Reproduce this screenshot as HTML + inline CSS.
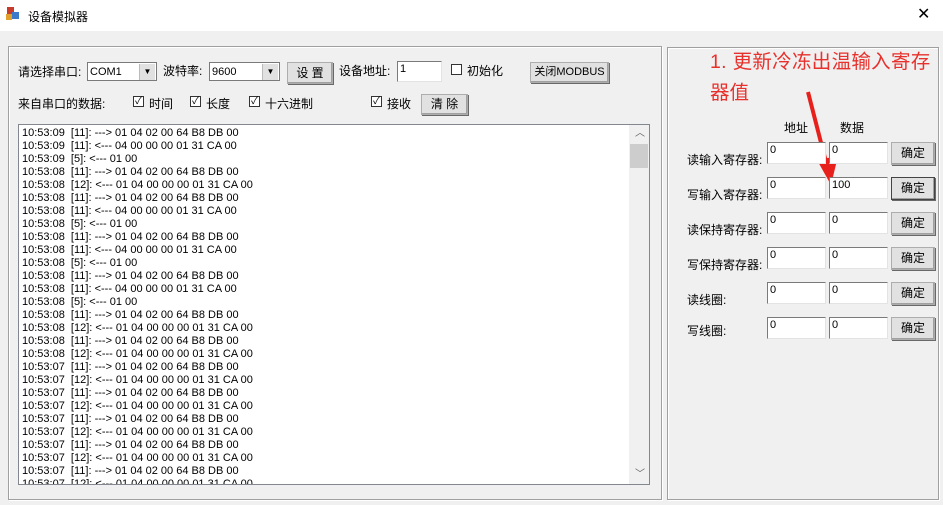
<!DOCTYPE html>
<html><head><meta charset="utf-8"><style>
body{margin:0;width:943px;height:505px;overflow:hidden;background:#f0f0f0;font-family:"Liberation Sans","Noto Sans CJK SC",sans-serif;font-size:12px;color:#000;position:relative}
.a{position:absolute;white-space:nowrap}
.grp{position:absolute;border:1px solid #a0a0a0;box-shadow:inset 1px 1px 0 #fff,1px 1px 0 #fff}
.edit{position:absolute;background:#fff;border:1px solid #7a7a7a;border-right-color:#e3e3e3;border-bottom-color:#e3e3e3;box-sizing:border-box;font-size:11px;padding:1px 2px;line-height:13px}
.btn{position:absolute;background:#e1e1e1;border:1px solid #adadad;box-shadow:inset -1px -1px 0 #a0a0a0,1px 1px 0 #696969;box-sizing:border-box;text-align:center;font-size:12px}
.cb{position:absolute;width:11px;height:11px;border:1px solid #333;background:#fff;box-sizing:border-box;font-size:10px;line-height:9px;text-align:center}
.combo{position:absolute;background:#fff;border:1px solid #7a7a7a;box-sizing:border-box;font-size:11px;padding:2px 2px;line-height:14px}
.combo i{position:absolute;right:1px;top:1px;width:15px;height:16px;background:#e1e1e1;border-left:1px solid #bbb;font-style:normal;font-size:8px;text-align:center;line-height:16px}
.log{position:absolute;left:18px;top:124px;width:632px;height:361px;background:#fff;border:1px solid #828790;box-sizing:border-box;overflow:hidden;padding-top:2px}
.log div{font-size:11px;line-height:13px;padding-left:3px;white-space:pre}
</style></head><body>
<div class="a" style="left:0;top:0;width:943px;height:31px;background:#fff"></div>
<div class="a" style="left:7px;top:7px;width:7px;height:9px;background:#c83a2a"></div>
<div class="a" style="left:12px;top:12px;width:7px;height:7px;background:#3a7ac8"></div>
<div class="a" style="left:6px;top:14px;width:6px;height:6px;background:#e0a030"></div>
<div class="a" style="left:28px;top:8px;font-size:12px">设备模拟器</div>
<div class="a" style="left:917px;top:4px;font-size:16px;color:#000">✕</div>

<div class="grp" style="left:8px;top:46px;width:652px;height:452px"></div>
<div class="grp" style="left:667px;top:47px;width:270px;height:451px"></div>

<div class="a" style="left:18px;top:63px">请选择串口:</div>
<div class="combo" style="left:87px;top:62px;width:70px;height:19px">COM1<i>▼</i></div>
<div class="a" style="left:163px;top:62px">波特率:</div>
<div class="combo" style="left:209px;top:62px;width:71px;height:19px">9600<i>▼</i></div>
<div class="btn" style="left:287px;top:62px;width:46px;height:22px;line-height:20px">设 置</div>
<div class="a" style="left:339px;top:62px">设备地址:</div>
<div class="edit" style="left:397px;top:61px;width:45px;height:21px">1</div>
<div class="cb" style="left:451px;top:64px"></div>
<div class="a" style="left:467px;top:62px">初始化</div>
<div class="btn" style="left:530px;top:62px;width:79px;height:21px;line-height:19px;font-size:11px">关闭MODBUS</div>

<div class="a" style="left:18px;top:95px">来自串口的数据:</div>
<div class="cb" style="left:133px;top:96px">✓</div><div class="a" style="left:149px;top:95px">时间</div>
<div class="cb" style="left:190px;top:96px">✓</div><div class="a" style="left:206px;top:95px">长度</div>
<div class="cb" style="left:249px;top:96px">✓</div><div class="a" style="left:265px;top:95px">十六进制</div>
<div class="cb" style="left:371px;top:96px">✓</div><div class="a" style="left:387px;top:95px">接收</div>
<div class="btn" style="left:421px;top:94px;width:47px;height:21px;line-height:19px">清 除</div>

<div class="log">
<div>10:53:09  [11]: ---> 01 04 02 00 64 B8 DB 00</div>
<div>10:53:09  [11]: <--- 04 00 00 00 01 31 CA 00</div>
<div>10:53:09  [5]: <--- 01 00</div>
<div>10:53:08  [11]: ---> 01 04 02 00 64 B8 DB 00</div>
<div>10:53:08  [12]: <--- 01 04 00 00 00 01 31 CA 00</div>
<div>10:53:08  [11]: ---> 01 04 02 00 64 B8 DB 00</div>
<div>10:53:08  [11]: <--- 04 00 00 00 01 31 CA 00</div>
<div>10:53:08  [5]: <--- 01 00</div>
<div>10:53:08  [11]: ---> 01 04 02 00 64 B8 DB 00</div>
<div>10:53:08  [11]: <--- 04 00 00 00 01 31 CA 00</div>
<div>10:53:08  [5]: <--- 01 00</div>
<div>10:53:08  [11]: ---> 01 04 02 00 64 B8 DB 00</div>
<div>10:53:08  [11]: <--- 04 00 00 00 01 31 CA 00</div>
<div>10:53:08  [5]: <--- 01 00</div>
<div>10:53:08  [11]: ---> 01 04 02 00 64 B8 DB 00</div>
<div>10:53:08  [12]: <--- 01 04 00 00 00 01 31 CA 00</div>
<div>10:53:08  [11]: ---> 01 04 02 00 64 B8 DB 00</div>
<div>10:53:08  [12]: <--- 01 04 00 00 00 01 31 CA 00</div>
<div>10:53:07  [11]: ---> 01 04 02 00 64 B8 DB 00</div>
<div>10:53:07  [12]: <--- 01 04 00 00 00 01 31 CA 00</div>
<div>10:53:07  [11]: ---> 01 04 02 00 64 B8 DB 00</div>
<div>10:53:07  [12]: <--- 01 04 00 00 00 01 31 CA 00</div>
<div>10:53:07  [11]: ---> 01 04 02 00 64 B8 DB 00</div>
<div>10:53:07  [12]: <--- 01 04 00 00 00 01 31 CA 00</div>
<div>10:53:07  [11]: ---> 01 04 02 00 64 B8 DB 00</div>
<div>10:53:07  [12]: <--- 01 04 00 00 00 01 31 CA 00</div>
<div>10:53:07  [11]: ---> 01 04 02 00 64 B8 DB 00</div>
<div>10:53:07  [12]: <--- 01 04 00 00 00 01 31 CA 00</div>
<div style="position:absolute;right:0;top:0;width:17px;height:359px;background:#f0f0f0"></div>
<div style="position:absolute;right:1px;top:19px;width:15px;height:24px;background:#cdcdcd"></div>
<div style="position:absolute;right:4px;top:2px;font-size:10px;padding:0;color:#606060">︿</div>
<div style="position:absolute;right:4px;top:343px;font-size:10px;padding:0;color:#606060">﹀</div>
</div>

<div class="a" style="left:710px;top:45px;font-size:19.5px;color:#e8302c;letter-spacing:0.3px">1. 更新冷冻出温输入寄存</div>
<div class="a" style="left:710px;top:76px;font-size:19.5px;color:#e8302c">器值</div>
<svg class="a" style="left:800px;top:88px" width="45" height="100"><line x1="8" y1="4" x2="27" y2="78" stroke="#e8201c" stroke-width="4"/><polygon points="17,72 38,68 31,97" fill="#e8201c"/></svg>

<div class="a" style="left:784px;top:119px">地址</div>
<div class="a" style="left:840px;top:119px">数据</div>
<div class="a" style="left:687px;top:151px">读输入寄存器:</div>
<div class="a" style="left:687px;top:186px">写输入寄存器:</div>
<div class="a" style="left:687px;top:221px">读保持寄存器:</div>
<div class="a" style="left:687px;top:256px">写保持寄存器:</div>
<div class="a" style="left:687px;top:291px">读线圈:</div>
<div class="a" style="left:687px;top:322px">写线圈:</div>

<div class="edit" style="left:767px;top:142px;width:59px;height:22px">0</div><div class="edit" style="left:829px;top:142px;width:59px;height:22px">0</div><div class="btn" style="left:891px;top:142px;width:44px;height:23px;line-height:21px">确定</div>
<div class="edit" style="left:767px;top:177px;width:59px;height:22px">0</div><div class="edit" style="left:829px;top:177px;width:59px;height:22px">100</div><div class="btn" style="left:891px;top:177px;width:44px;height:23px;line-height:21px;border-color:#444">确定</div>
<div class="edit" style="left:767px;top:212px;width:59px;height:22px">0</div><div class="edit" style="left:829px;top:212px;width:59px;height:22px">0</div><div class="btn" style="left:891px;top:212px;width:44px;height:23px;line-height:21px">确定</div>
<div class="edit" style="left:767px;top:247px;width:59px;height:22px">0</div><div class="edit" style="left:829px;top:247px;width:59px;height:22px">0</div><div class="btn" style="left:891px;top:247px;width:44px;height:23px;line-height:21px">确定</div>
<div class="edit" style="left:767px;top:282px;width:59px;height:22px">0</div><div class="edit" style="left:829px;top:282px;width:59px;height:22px">0</div><div class="btn" style="left:891px;top:282px;width:44px;height:23px;line-height:21px">确定</div>
<div class="edit" style="left:767px;top:317px;width:59px;height:22px">0</div><div class="edit" style="left:829px;top:317px;width:59px;height:22px">0</div><div class="btn" style="left:891px;top:317px;width:44px;height:23px;line-height:21px">确定</div>
</body></html>
